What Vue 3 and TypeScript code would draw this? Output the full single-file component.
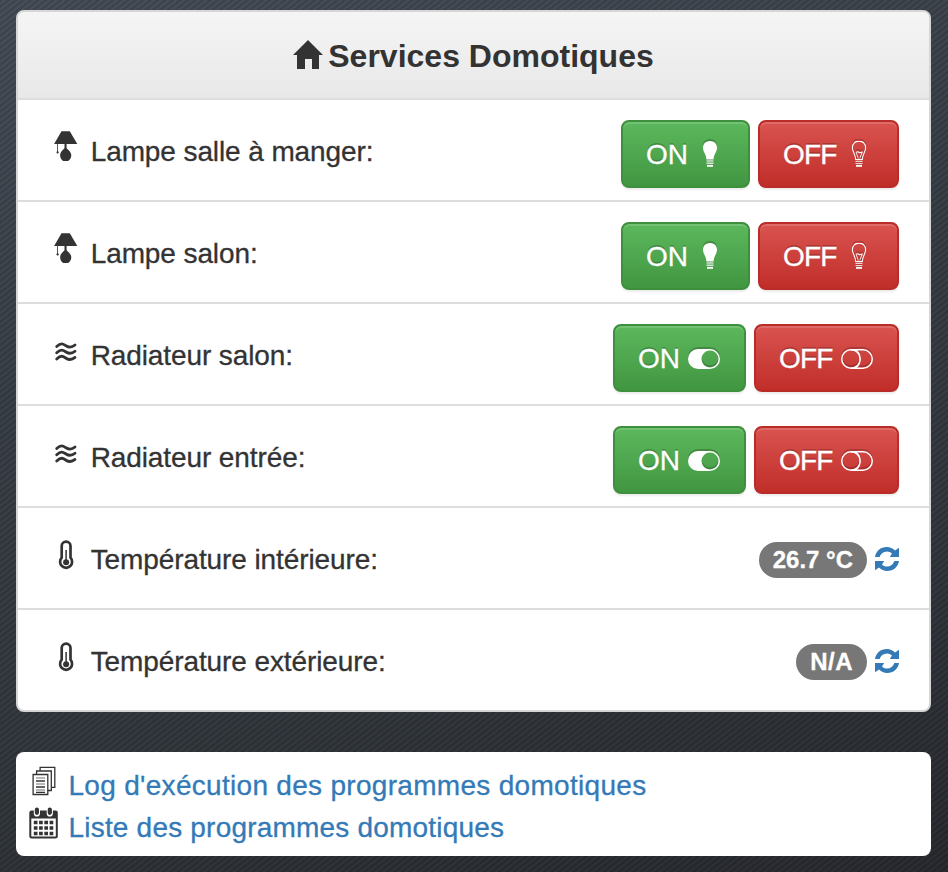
<script setup lang="ts">
interface Service {
  label: string
  kind: 'lamp' | 'heater' | 'thermometer'
  value?: string
}

const services: Service[] = [
  { label: 'Lampe salle à manger:', kind: 'lamp' },
  { label: 'Lampe salon:', kind: 'lamp' },
  { label: 'Radiateur salon:', kind: 'heater' },
  { label: 'Radiateur entrée:', kind: 'heater' },
  { label: 'Température intérieure:', kind: 'thermometer', value: '26.7 °C' },
  { label: 'Température extérieure:', kind: 'thermometer', value: 'N/A' },
]
</script>

<template>
  <main class="page">
    <section class="panel">
      <header class="heading">
        <svg class="home" width="30" height="30" viewBox="0 0 30 30">
          <path d="M15 0 30 15H26V29H19V19H12V29H4V15H0Z" fill="#333" />
        </svg>
        <h1>Services Domotiques</h1>
      </header>
      <div v-for="s in services" :key="s.label" class="row">
        <div class="label">
          <svg v-if="s.kind === 'lamp'" class="kind" width="24" height="32" viewBox="0 0 24 32" fill="#333">
            <path d="M7.500 1.200H15.800L23.300 14H.1Z" />
            <path d="M10.500 13h2.100v5c.2 1.200 4.700 3.400 4.700 7.200 0 2.600-1.500 4.600-3.200 5.800H9.200C7.500 29.800 6.100 27.800 6.100 25.200 6.100 21.400 10.300 19.200 10.500 18Z" />
            <path d="M3.200 14h.8v7.300a1.100 1.100 0 1 1-.8 0Z" />
          </svg>
          <svg v-else-if="s.kind === 'heater'" class="kind" width="24" height="32" viewBox="0 3 24 32" fill="none" stroke="#333" stroke-width="2.800" stroke-linecap="round">
            <path d="M2.700 15.600C7.500 11 9.500 13.200 12 14.800S17 17.400 21 14" />
            <path d="M2.700 21.800C7.500 17.200 9.500 19.400 12 21S17 23.600 21 20.200" />
            <path d="M2.700 28C7.500 23.400 9.500 25.600 12 27.200S17 29.800 21 26.400" />
          </svg>
          <svg v-else class="kind" width="24" height="32" viewBox="0 -1 24 32">
            <path d="M7.700 18.700V7a4.400 4.400 0 0 1 8.800 0v11.700a6 6 0 1 1-8.800 0Z" fill="none" stroke="#333" stroke-width="2.700" />
            <path d="M12.100 11v12" stroke="#333" stroke-width="1.500" />
            <circle cx="12.100" cy="23.200" r="3" fill="#333" />
          </svg>
          <span>{{ s.label }}</span>
        </div>
        <div v-if="s.value" class="reading">
          <span class="badge" :class="{ empty: s.value === 'N/A' }">{{ s.value }}</span>
          <a class="refresh" aria-label="Actualiser">
            <svg width="24" height="24" viewBox="0 0 24 24" fill="#337ab7">
              <path d="M0 10C1 4 5.500 0 11.800 0c3.200 0 6 1.300 8.200 3.500L24 .8V10H14.800L17 6.600C15.600 5.200 14 4.400 12 4.400 8.200 4.400 5.800 6.500 4.600 10Z" />
              <path d="M24 14C23 20 18.500 24 12.200 24 9 24 6.200 22.700 4 20.500L0 23.200V14H9.200L7 17.400C8.400 18.800 10 19.600 12 19.600 15.800 19.600 18.200 17.500 19.400 14Z" />
            </svg>
          </a>
        </div>
        <div v-else class="actions">
          <button class="btn on" type="button">
            <span>ON</span>
            <svg v-if="s.kind === 'lamp'" width="28" height="28" viewBox="0 .5 28 28">
              <path d="M14 0.500c4 0 7 2.800 7 6.500 0 4.800-3.300 6.600-3.400 12h-7.200C10.300 13.600 7 11.800 7 7 7 3.300 10 .5 14 .5Z" fill="#fff" />
              <path d="M10.500 20.400h7M10.500 22.800h7" stroke="#d5ead5" stroke-width="1.500" />
              <path d="M11 25.300h6" stroke="#fff" stroke-width="2" />
            </svg>
            <svg v-else width="32" height="20" viewBox="0 0 32 20">
              <path fill-rule="evenodd" d="M10 0h12a10 10 0 0 1 0 20H10a10 10 0 0 1 0-20Zm12 1.500a8.500 8.500 0 1 0 0 17a8.500 8.500 0 1 0 0-17Z" fill="#fff" />
            </svg>
          </button>
          <button class="btn off" type="button">
            <span>OFF</span>
            <svg v-if="s.kind === 'lamp'" width="28" height="28" viewBox="0 .5 28 28" fill="none" stroke="#fff">
              <path d="M10.700 19C10.600 13.500 7.400 11.500 7.400 7 7.400 3.300 10.200.6 14 .6S20.600 3.300 20.600 7c0 4.500-3.200 6.500-3.300 12Z" stroke-width="1.100" />
              <path d="m13.300 18-2.200-6.500 2-.2 1.400 1 2.800-1-2.500 6.500M12.500 11.500l4.800 1" stroke-width="1" opacity=".85" />
              <path d="M10.500 20.800h7M10.500 23h7" stroke-width="1.200" opacity=".8" />
              <path d="M11 25.300h6" stroke-width="2" />
            </svg>
            <svg v-else width="32" height="20" viewBox="0 0 32 20" fill="none" stroke="#fff" stroke-width="1.500">
              <rect x=".75" y=".75" width="30.500" height="18.500" rx="9.250" />
              <path d="M10 .75a9.250 9.250 0 0 1 0 18.500M14 .75c3 1.600 5 5 5 9.250s-2 7.650-5 9.250" />
            </svg>
          </button>
        </div>
      </div>
    </section>

    <nav class="links">
      <div class="link">
        <svg width="30" height="34" viewBox="-.5 2 30 34" fill="#fff" stroke="#333" stroke-width="1.300">
          <path d="M10.600 4.300h14.700v20H10.600Z" />
          <path d="M7.100 8h14.700v19.500H7.100Z" />
          <path d="M3.600 11.500h14.700v20H3.600Z" />
          <path d="M6.500 15h9M6.500 21h9M6.500 27h9" stroke-width="1" opacity=".7" />
          <path d="M6.500 18h9M6.500 24h9M6.500 29.300h9" stroke-width="1.300" />
        </svg>
        <a>Log d'exécution des programmes domotiques</a>
      </div>
      <div class="link list">
        <svg width="30" height="34" viewBox=".2 2 30 34">
          <rect x=".5" y="5.500" width="28.500" height="28" rx="2.300" fill="#333" />
          <path d="M2.500 13.500h24.500v18H2.500Z" fill="#fff" />
          <path d="M5 17.500h19.500M5 23h19.500M5 28.500h19.500" stroke="#333" stroke-width="3.700" stroke-dasharray="3.700 1.560" />
          <path d="M8.100 4.800v3.600M21 4.800v3.600" stroke="#fff" stroke-width="6.200" stroke-linecap="round" />
          <path d="M8.100 4.600v3.200M21 4.600v3.200" stroke="#333" stroke-width="4.200" stroke-linecap="round" />
        </svg>
        <a>Liste des programmes domotiques</a>
      </div>
    </nav>
  </main>
</template>

<style>
body {
  margin: 0;
  background: #2e3238;
}
</style>

<style scoped>
.page {
  box-sizing: border-box;
  min-height: 872px;
  padding: 10px 17px 16px 16px;
  font-family: "Liberation Sans", Arial, sans-serif;
  font-size: 28px;
  color: #333;
  background:
    repeating-linear-gradient(142deg, rgba(0, 0, 0, .1) 0 1.500px, rgba(255, 255, 255, .02) 2.500px 3.500px, rgba(0, 0, 0, .1) 4.600px),
    linear-gradient(165deg, #454c57 0%, #383e46 35%, #31363c 70%, #27292e 100%);
}
.panel {
  box-sizing: border-box;
  height: 702px;
  border: 2px solid #d6d6d6;
  border-radius: 8px;
  background: #fff;
  overflow: hidden;
}
.heading {
  display: flex;
  justify-content: center;
  height: 86px;
  border-bottom: 2px solid #ddd;
  background: linear-gradient(#f5f5f5, #e8e8e8);
}
.home {
  margin: 28px 5px 0 0;
}
h1 {
  margin: 0;
  font-size: 32px;
  line-height: 88px;
  font-weight: bold;
}
.row {
  display: flex;
  justify-content: space-between;
  box-sizing: border-box;
  height: 102px;
  padding: 20px 30px 12px 36px;
  border-bottom: 2px solid #ddd;
}
.row:last-child {
  border-bottom: 0;
}
.label {
  display: flex;
  height: 64px;
  line-height: 64px;
  letter-spacing: -.1px;
  white-space: nowrap;
}
.label span,
.link a,
.btn span {
  -webkit-text-stroke: .3px currentColor;
}
.kind {
  margin: 10px 12.700px 0 0;
}
.actions {
  display: flex;
  gap: 8px;
}
.btn {
  display: flex;
  align-items: center;
  gap: 8px;
  box-sizing: border-box;
  height: 68px;
  padding: 2px 24.300px 0 23px;
  border: 2px solid;
  border-radius: 8px;
  color: #fff;
  font: inherit;
  text-shadow: 0 -2px 0 rgba(0, 0, 0, .2);
  box-shadow: inset 0 2px 0 rgba(255, 255, 255, .15), 0 2px 2px rgba(0, 0, 0, .075);
}
.btn svg {
  filter: drop-shadow(0 -1.500px 0 rgba(0, 0, 0, .2));
}
.btn.on {
  border-color: #3e8f3e;
  background: linear-gradient(#5cb85c, #419641);
}
.btn.on span {
  letter-spacing: -.1px;
}
.btn.off {
  border-color: #b92c28;
  background: linear-gradient(#d9534f, #c12e2a);
}
.btn.off span {
  margin-right: .3px;
  letter-spacing: -.9px;
}
.reading {
  display: flex;
  align-items: center;
  gap: 8px;
  height: 64px;
}
.badge {
  padding: 0 14px;
  border-radius: 18px;
  background: #777;
  color: #fff;
  font-size: 24px;
  font-weight: bold;
  line-height: 36px;
  -webkit-text-stroke: .3px currentColor;
}
.badge.empty {
  letter-spacing: .5px;
}
.refresh {
  display: flex;
  margin-bottom: 2px;
}
.links {
  box-sizing: border-box;
  height: 104px;
  margin-top: 40px;
  padding: 13px 12px 7px 12.500px;
  border-radius: 8px;
  background: #fff;
}
.link {
  display: flex;
  gap: 10px;
  height: 42px;
  line-height: 42px;
  letter-spacing: .3px;
  color: #337ab7;
}
.link.list {
  letter-spacing: .2px;
}
</style>
